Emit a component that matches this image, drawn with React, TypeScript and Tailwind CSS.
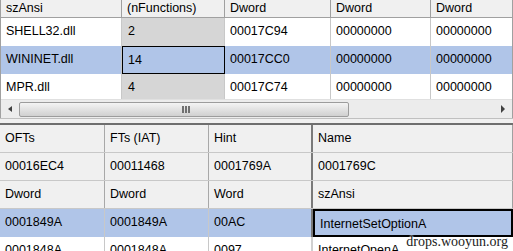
import React from 'react';

const font = { fontFamily: '"Liberation Sans", Arial, sans-serif' };

const topHead = ['szAnsi', '(nFunctions)', 'Dword', 'Dword', 'Dword'];
const topRows = [
  ['SHELL32.dll', '2', '00017C94', '00000000', '00000000'],
  ['WININET.dll', '14', '00017CC0', '00000000', '00000000'],
  ['MPR.dll', '4', '00017C74', '00000000', '00000000'],
];

const bottomHead = [
  ['OFTs', 'FTs (IAT)', 'Hint', 'Name'],
  ['00016EC4', '00011468', '0001769A', '0001769C'],
  ['Dword', 'Dword', 'Word', 'szAnsi'],
];
const bottomRows = [
  ['0001849A', '0001849A', '00AC', 'InternetSetOptionA'],
  ['0001848A', '0001848A', '0097', 'InternetOpenA'],
];

const topCols = 'grid grid-cols-[121px_103px_106px_100px_1fr]';
const bottomCols = 'grid grid-cols-[105px_104px_104px_1fr]';

function TopGrid() {
  return (
    <div className="border-l border-r border-[#a0a0a0] bg-white">
      <div className={`${topCols} h-[18px] bg-[#f0f0f0] border-b border-[#a0a0a0]`}>
        {topHead.map((h, i) => (
          <div
            key={i}
            className="pl-[5px] leading-[16px] text-[12.5px] border-r border-[#a0a0a0] last:border-r-0 overflow-hidden whitespace-nowrap"
          >
            {h}
          </div>
        ))}
      </div>
      {topRows.map((r, ri) => {
        const sel = ri === 1;
        return (
          <div key={ri} className={`${topCols} ${ri === 2 ? 'h-[25px]' : 'h-[28px]'} ${sel ? 'bg-[#b0c5e8]' : ''}`}>
            {r.map((c, ci) => (
              <div
                key={ci}
                className={`pl-[5px] text-[12.5px] leading-[27px] overflow-hidden whitespace-nowrap border-r border-[#c8c8c8] last:border-r-0 ${
                  ci === 1 && !sel ? 'bg-[#d6d6d6] pl-[6px]' : ''
                } ${ci === 1 && sel ? 'border border-black pl-[5px] leading-[25px]' : ''}`}
              >
                {c}
              </div>
            ))}
          </div>
        );
      })}
      <ScrollBar />
    </div>
  );
}

function ScrollBar() {
  return (
    <div className="h-[19px] flex items-center bg-[#ececec] border-t border-[#e0e0e0]">
      <div className="w-[18px] h-full flex items-center justify-center">
        <div className="w-0 h-0 border-y-[3px] border-y-transparent border-r-[4px] border-r-[#404040]" />
      </div>
      <div className="w-[330px] h-[15px] rounded-[2px] border border-[#9c9c9c] bg-gradient-to-b from-[#f4f4f4] via-[#e2e2e2] to-[#d0d0d0] flex items-center justify-center">
        <div className="flex gap-[1px] ml-[4px]">
          <div className="w-[2px] h-[7px] bg-[#707070]" />
          <div className="w-[2px] h-[7px] bg-[#707070]" />
          <div className="w-[2px] h-[7px] bg-[#707070]" />
        </div>
      </div>
      <div className="flex-1" />
      <div className="w-[18px] h-full flex items-center justify-center">
        <div className="w-0 h-0 border-y-[4px] border-y-transparent border-l-[4px] border-l-[#404040]" />
      </div>
    </div>
  );
}

function BottomGrid() {
  return (
    <div className="border-t-2 border-[#6e6e6e] bg-white">
      {bottomHead.map((r, ri) => (
        <div key={ri} className={`${bottomCols} h-[28px] bg-[#f0f0f0] border-b border-[#c8c8c8]`}>
          {r.map((c, ci) => (
            <div
              key={ci}
              className={`pl-[5px] text-[12.5px] leading-[27px] whitespace-nowrap overflow-hidden ${
                ci === 2 ? 'border-r-2 border-[#7a7a7a]' : ci < 2 ? 'border-r border-[#a8a8a8]' : 'border-r border-[#a0a0a0]'
              }`}
            >
              {c}
            </div>
          ))}
        </div>
      ))}
      {bottomRows.map((r, ri) => {
        const sel = ri === 0;
        return (
          <div key={ri} className={`${bottomCols} h-[28px] ${sel ? 'bg-[#b0c5e8]' : ''}`}>
            {r.map((c, ci) => (
              <div
                key={ci}
                className={`pl-[5px] text-[12.5px] leading-[27px] whitespace-nowrap overflow-hidden ${
                  ci === 2 ? (sel ? 'border-r-2 border-[#7a7a7a]' : 'border-r-2 border-[#d0d0d0]') : ci < 2 ? 'border-r border-[#c8c8c8]' : ''
                } ${ci === 3 && sel ? 'border-2 border-black leading-[24px] pl-[3px]' : ''}`}
              >
                {c}
              </div>
            ))}
          </div>
        );
      })}
    </div>
  );
}

export default function App() {
  return (
    <div className="relative w-[513px] h-[251px] overflow-hidden bg-white text-black" style={font}>
      <TopGrid />
      <div className="h-[5px] bg-[#f0f0f0] border-t border-[#c0c0c0]" />
      <BottomGrid />
      <div
        className="absolute right-[5px] bottom-[1px] text-[14px] leading-[16px] text-[#222]"
        style={{ fontFamily: '"Liberation Serif", "Times New Roman", serif', textShadow: '0 0 2px #fff, 0 0 2px #fff, 0 0 2px #fff' }}
      >
        drops.wooyun.org
      </div>
    </div>
  );
}
